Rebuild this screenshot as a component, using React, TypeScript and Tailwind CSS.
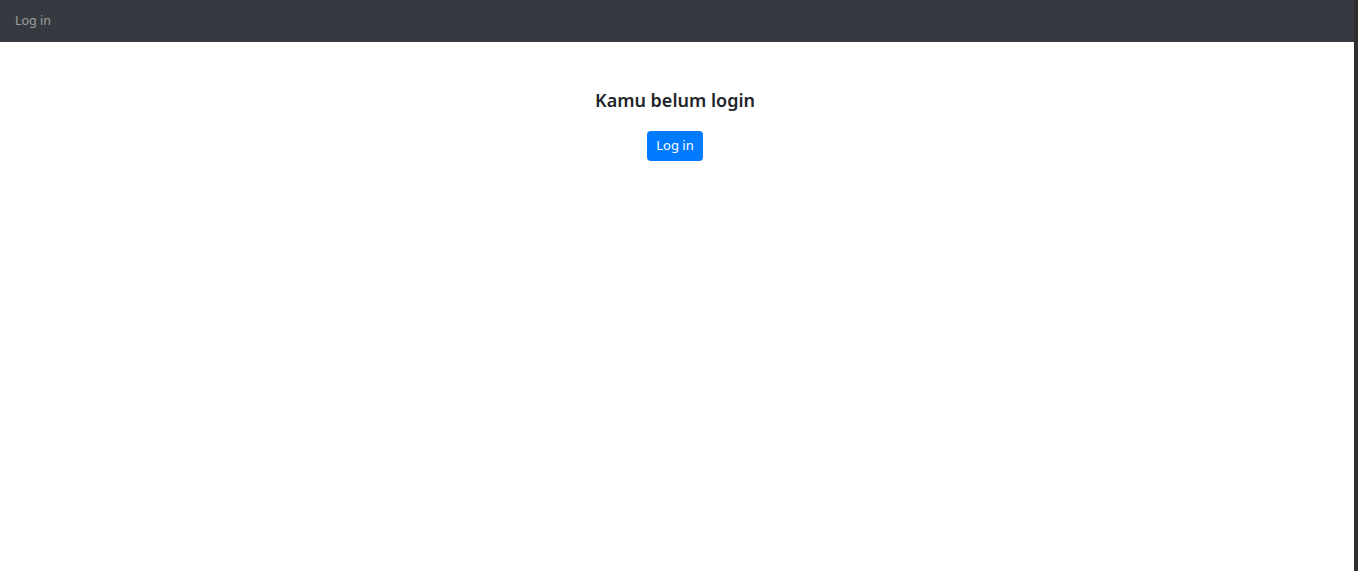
const App = () => {
  return (
    <div
      className="flex h-screen w-full bg-white"
      style={{ fontFamily: '"Noto Sans", "Open Sans", sans-serif' }}
    >
      <div className="flex flex-1 flex-col">
        {/* Navbar */}
        <nav className="flex h-[42px] items-center bg-[#343a40] px-[15px]">
          <a className="text-[12.5px] text-white/50">Log in</a>
        </nav>

        {/* Main */}
        <main className="flex flex-col items-center pr-[4px] pt-[44px]">
          <h5 className="text-[18px] font-semibold leading-[28px] text-[#212529]">
            Kamu belum login
          </h5>
          <button className="mt-[17px] h-[30px] rounded-[4px] bg-[#007bff] px-[9px] text-[13px] text-white">
            Log in
          </button>
        </main>
      </div>
      <div className="w-[4px] bg-[#2f2f2f]"></div>
    </div>
  );
};

export default App;
